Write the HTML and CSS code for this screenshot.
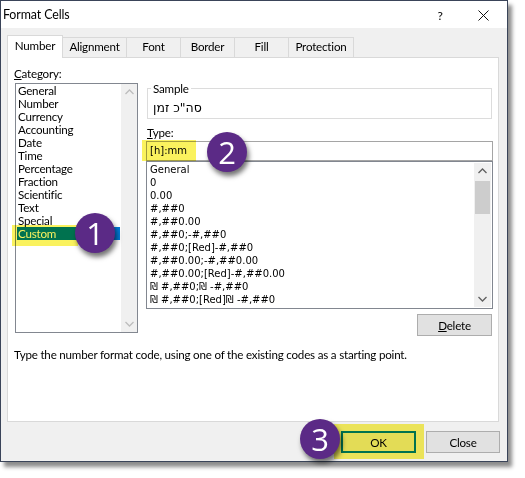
FILE: index.html
```html
<!DOCTYPE html>
<html>
<head>
<meta charset="utf-8">
<title>Format Cells</title>
<link rel="stylesheet" href="styles.css">
</head>
<body>
<div class="window">
  <div class="titlebar">
    <span class="title">Format Cells</span>
    <span class="help">?</span>
    <span class="xbtn"><svg width="11" height="11" viewBox="0 0 11 11"><path d="M0.5 0.5 L10.5 10.5 M10.5 0.5 L0.5 10.5" stroke="#111" stroke-width="1" fill="none"/></svg></span>
  </div>
  <div class="body">
    <div class="tabs">
      <div class="tab active">Number</div>
      <div class="tab">Alignment</div>
      <div class="tab">Font</div>
      <div class="tab">Border</div>
      <div class="tab">Fill</div>
      <div class="tab">Protection</div>
    </div>
    <div class="panel">
      <div class="cols">
        <div class="left">
          <div class="label cat-label"><u>C</u>ategory:</div>
          <div class="catlist">
            <ul class="items">
              <li>General</li>
              <li>Number</li>
              <li>Currency</li>
              <li>Accounting</li>
              <li>Date</li>
              <li>Time</li>
              <li>Percentage</li>
              <li>Fraction</li>
              <li>Scientific</li>
              <li>Text</li>
              <li>Special</li>
              <li class="sel">Custom</li>
            </ul>
            <div class="vscroll off">
              <svg class="arr" width="9" height="6" viewBox="0 0 9 6"><path d="M0.5 5 L4.5 1 L8.5 5" stroke="#bdbdbd" stroke-width="1.3" fill="none"/></svg>
              <div class="track"></div>
              <svg class="arr" width="9" height="6" viewBox="0 0 9 6"><path d="M0.5 1 L4.5 5 L8.5 1" stroke="#bdbdbd" stroke-width="1.3" fill="none"/></svg>
            </div>
          </div>
        </div>
        <div class="right">
          <fieldset class="sample">
            <legend>Sample</legend>
            <div class="sample-val">סה"כ זמן</div>
          </fieldset>
          <div class="label type-label"><u>T</u>ype:</div>
          <div class="typeinput">[h]:mm</div>
          <div class="typelist">
            <ul class="codes">
              <li>General</li>
              <li>0</li>
              <li>0.00</li>
              <li>#,##0</li>
              <li>#,##0.00</li>
              <li>#,##0;-#,##0</li>
              <li>#,##0;[Red]-#,##0</li>
              <li>#,##0.00;-#,##0.00</li>
              <li>#,##0.00;[Red]-#,##0.00</li>
              <li>₪ #,##0;₪ -#,##0</li>
              <li>₪ #,##0;[Red]₪ -#,##0</li>
            </ul>
            <div class="vscroll">
              <svg class="arr" width="9" height="6" viewBox="0 0 9 6"><path d="M0.5 5 L4.5 1 L8.5 5" stroke="#606060" stroke-width="1.3" fill="none"/></svg>
              <div class="track"><div class="thumb"></div></div>
              <svg class="arr" width="9" height="6" viewBox="0 0 9 6"><path d="M0.5 1 L4.5 5 L8.5 1" stroke="#606060" stroke-width="1.3" fill="none"/></svg>
            </div>
          </div>
          <div class="delrow"><button class="btn del"><u>D</u>elete</button></div>
        </div>
      </div>
      <p class="desc">Type the number format code, using one of the existing codes as a starting point.</p>
    </div>
  </div>
  <div class="footer">
    <button class="btn ok">OK</button>
    <button class="btn">Close</button>
  </div>

  <div class="hl hl1"></div>
  <div class="hl hl2"></div>
  <div class="hl hl3"></div>
  <div class="badge b1">1</div>
  <div class="badge b2">2</div>
  <div class="badge b3">3</div>
</div>
</body>
</html>
```

FILE: styles.css
```css
* { box-sizing: border-box; }
html, body { margin: 0; padding: 0; background: #ffffff; }
body {
  font-family: "Lato", "Noto Sans", "DejaVu Sans", sans-serif;
  font-size: 11.6px;
  letter-spacing: -0.2px;
  color: #000;
  width: 525px;
  height: 478px;
  overflow: hidden;
}
.window {
  position: relative;
  width: 508px;
  height: 462px;
  border: 1px solid #3a4459;
  background: #f0f0f0;
  box-shadow: 4px 5px 4px rgba(0,0,0,0.45);
  display: flex;
  flex-direction: column;
}
.titlebar {
  height: 27px;
  background: #ffffff;
  display: flex;
  align-items: center;
  padding-left: 2px;
  flex-shrink: 0;
}
.title { font-size: 12.4px; flex: 1; margin-top: -1px; letter-spacing: -0.1px; }
.help { width: 14px; margin-right: 31px; font-size: 12px; text-align: center; padding-top: 1px; }
.xbtn { width: 11px; height: 11px; margin-right: 18px; display: flex; margin-top: 1px; }

.body { padding: 8px 8px 0 6px; }
.tabs { display: flex; align-items: flex-end; height: 21px; position: relative; z-index: 1; }
.tab {
  height: 20px;
  border: 1px solid #d9d9d9;
  border-bottom: none;
  margin-left: -1px;
  background: #f0f0f0;
  text-align: center;
  line-height: 18px;
}
.tab:nth-child(1) { width: 56px; margin-left: 0; }
.tab:nth-child(2) { width: 64px; }
.tab:nth-child(3) { width: 55px; }
.tab:nth-child(4) { width: 55px; }
.tab:nth-child(5) { width: 55px; }
.tab:nth-child(6) { width: 66px; }
.tab.active {
  height: 23px;
  background: #ffffff;
  margin-bottom: -1px;
  padding-top: 1px;
  z-index: 2;
}
.tab.active + .tab { margin-left: 0; border-left: none; }

.panel {
  height: 365px;
  background: #ffffff;
  border: 1px solid #d9d9d9;
  padding: 9px 5px 0 7px;
}
.cols { display: grid; grid-template-columns: 123px 347px; column-gap: 8px; }
.label { line-height: 13px; height: 16px; }
.cat-label { margin-left: -1px; }
u { text-decoration: underline; text-underline-offset: 1px; }

.catlist {
  height: 250px;
  border: 1px solid #828790;
  display: flex;
  padding: 0 0 1px 1px;
}
.items { list-style: none; margin: 0; padding: 0; flex: 1; }
.items li { line-height: 13px; height: 13px; padding-left: 1px; }
.items li.sel { background: #0078d7; color: #ffffff; }
.vscroll {
  width: 17px;
  background: #f0f0f0;
  display: flex;
  flex-direction: column;
  align-items: center;
  margin-left: 1px;
}
.vscroll .arr { margin: 5px 0; flex-shrink: 0; }
.vscroll .track { flex: 1; width: 100%; padding: 2px 1px 0; }
.catlist .vscroll { margin: 0 0 -1px 1px; width: 16px; }
.thumb { height: 33px; background: #cdcdcd; width: 100%; }

.sample {
  margin: 15px 1px 0 1px;
  padding: 0;
  height: 37px;
  border: 1px solid #dcdcdc;
}
.sample legend {
  padding: 0 2px;
  margin-left: 3px;
  line-height: 13px;
}
.sample-val { padding: 6px 5px 0; line-height: 14px; font-family: "DejaVu Sans", sans-serif; font-size: 12.5px; letter-spacing: 0; }
.type-label { margin-top: 7px; line-height: 14px; height: 15px; margin-left: 1px; }
.typeinput {
  height: 20px;
  border: 1px solid #a5a5a5;
  padding-left: 3px;
  line-height: 18px;
  font-family: "DejaVu Sans", sans-serif;
  font-size: 10px;
  letter-spacing: 0;
}
.typelist {
  height: 148px;
  border: 1px solid #828790;
  display: flex;
  padding: 1px 1px 1px 0;
}
.codes { list-style: none; margin: 0; padding: 0 0 0 3px; flex: 1; overflow: hidden; }
.codes li {
  line-height: 13px;
  height: 13px;
  font-family: "DejaVu Sans", sans-serif;
  font-size: 10px;
  letter-spacing: 0;
  white-space: nowrap;
}
.delrow { display: flex; justify-content: flex-end; margin-top: 5px; padding-right: 1px; }

.btn {
  font-family: inherit;
  font-size: 11.6px;
  letter-spacing: -0.2px;
  height: 22px;
  background: #e1e1e1;
  border: 1px solid #adadad;
  padding: 0;
  color: #000;
}
.del { width: 75px; }
.desc { margin: 12px 0 0 -1px; line-height: 14px; }

.footer {
  flex: 1;
  display: flex;
  justify-content: flex-end;
  align-items: flex-start;
  padding: 9px 7px 0 0;
  gap: 10px;
}
.footer .btn { width: 74px; }
.footer .btn.ok { width: 75px; border: 2px solid #0078d7; background: #e8e8e8; }

.hl {
  position: absolute;
  background: #faf25e;
  mix-blend-mode: multiply;
  z-index: 5;
}
.hl1 { left: 11px; top: 224px; width: 66px; height: 21px; }
.hl2 { left: 141px; top: 139px; width: 54px; height: 21px; }
.hl3 { left: 333px; top: 423px; width: 90px; height: 35px; }

.badge {
  position: absolute;
  width: 40px;
  height: 40px;
  border-radius: 50%;
  background: #5b2a86;
  color: #ffffff;
  font-family: "Open Sans", "Liberation Sans", sans-serif;
  font-size: 31px;
  letter-spacing: 0;
  line-height: 40px;
  text-align: center;
  box-shadow: 2px 4px 5px rgba(0,0,0,0.55);
  z-index: 6;
}
.b1 { left: 74px; top: 212px; }
.b2 { left: 206px; top: 131px; }
.b3 { left: 299px; top: 418px; }
```
